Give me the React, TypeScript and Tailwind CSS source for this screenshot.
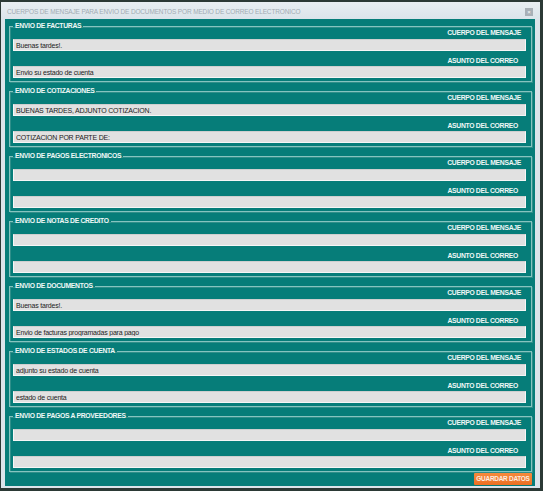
import React from "react";

const secciones = [
  { titulo: "ENVIO DE FACTURAS", cuerpo: "Buenas tardes!.", asunto: "Envio su estado de cuenta" },
  { titulo: "ENVIO DE COTIZACIONES", cuerpo: "BUENAS TARDES, ADJUNTO COTIZACION.", asunto: "COTIZACION POR PARTE DE:" },
  { titulo: "ENVIO DE PAGOS ELECTRONICOS", cuerpo: "", asunto: "" },
  { titulo: "ENVIO DE NOTAS DE CREDITO", cuerpo: "", asunto: "" },
  { titulo: "ENVIO DE DOCUMENTOS", cuerpo: "Buenas tardes!.", asunto: "Envio de facturas programadas para pago" },
  { titulo: "ENVIO DE ESTADOS DE CUENTA", cuerpo: "adjunto su estado de cuenta", asunto: "estado de cuenta" },
  { titulo: "ENVIO DE PAGOS A PROVEEDORES", cuerpo: "", asunto: "" },
];

function Seccion({ titulo, cuerpo, asunto }: { titulo: string; cuerpo: string; asunto: string }) {
  return (
    <fieldset className="flex flex-col border border-[#86c4c0] shadow-[1px_1px_0_#2f8f8a,inset_1px_1px_0_#2f8f8a] pl-[3px] pr-[5px] pb-[3px] h-[59px]">
      <legend className="px-[2px] text-[6.8px] leading-[6px] font-bold tracking-[-0.3px] text-[#eef7f6]">
        {titulo}
      </legend>
      <div className="self-end pr-[5px] text-[6.8px] leading-[7px] font-bold tracking-[-0.3px] text-[#eef7f6]">
        CUERPO DEL MENSAJE
      </div>
      <input
        readOnly
        value={cuerpo}
        className="mt-[3px] h-[12px] w-full bg-[#e1e1e1] border border-[#f6f6f6] border-t-[#cfcfcf] px-[2px] text-[7px] tracking-[-0.2px] text-[#1c1c1c] outline-none"
      />
      <div className="self-end mt-[6px] pr-[8px] text-[6.8px] leading-[7px] font-bold tracking-[-0.3px] text-[#eef7f6]">
        ASUNTO DEL CORREO
      </div>
      <input
        readOnly
        value={asunto}
        className="mt-[2px] h-[12px] w-full bg-[#e1e1e1] border border-[#f6f6f6] border-t-[#cfcfcf] px-[2px] text-[7px] tracking-[-0.2px] text-[#1c1c1c] outline-none"
      />
    </fieldset>
  );
}

export default function App() {
  return (
    <div className="w-[543px] h-[491px] bg-[#2b3935] pt-[2px] pl-[1px] font-['Liberation_Sans',Arial,sans-serif]">
      <div className="w-[539px] h-[486px] bg-[#dbe4ea] flex flex-col pl-[4px] pr-[5px] pb-[2px]">
        {/* Encabezado de la ventana */}
        <div className="h-[17px] -ml-[4px] -mr-[5px] pl-[6px] pr-[7px] pt-[3px] flex items-center justify-between bg-gradient-to-b from-[#e8eef2] to-[#dbe4ea]">
          <span className="text-[6.5px] tracking-[-0.15px] text-[#a2acb3]">
            CUERPOS DE MENSAJE PARA ENVIO DE DOCUMENTOS POR MEDIO DE CORREO ELECTRONICO
          </span>
          <span className="w-[8px] h-[8px] bg-[#a8b0b7] flex items-center justify-center text-[6px] leading-none text-white">
            ×
          </span>
        </div>

        {/* Contenido */}
        <div className="flex-1 bg-[#067d79] pt-[4px] pl-[4px] pr-[3px] flex flex-col gap-[6px]">
          {secciones.map((s) => (
            <Seccion key={s.titulo} {...s} />
          ))}
          <button className="self-end -mt-[5px] h-[12px] w-[58px] rounded-[1px] bg-gradient-to-b from-[#f68a3c] to-[#ec6f22] text-[6.5px] font-bold tracking-[-0.3px] text-[#fdeee2]">
            GUARDAR DATOS
          </button>
        </div>
      </div>
    </div>
  );
}
